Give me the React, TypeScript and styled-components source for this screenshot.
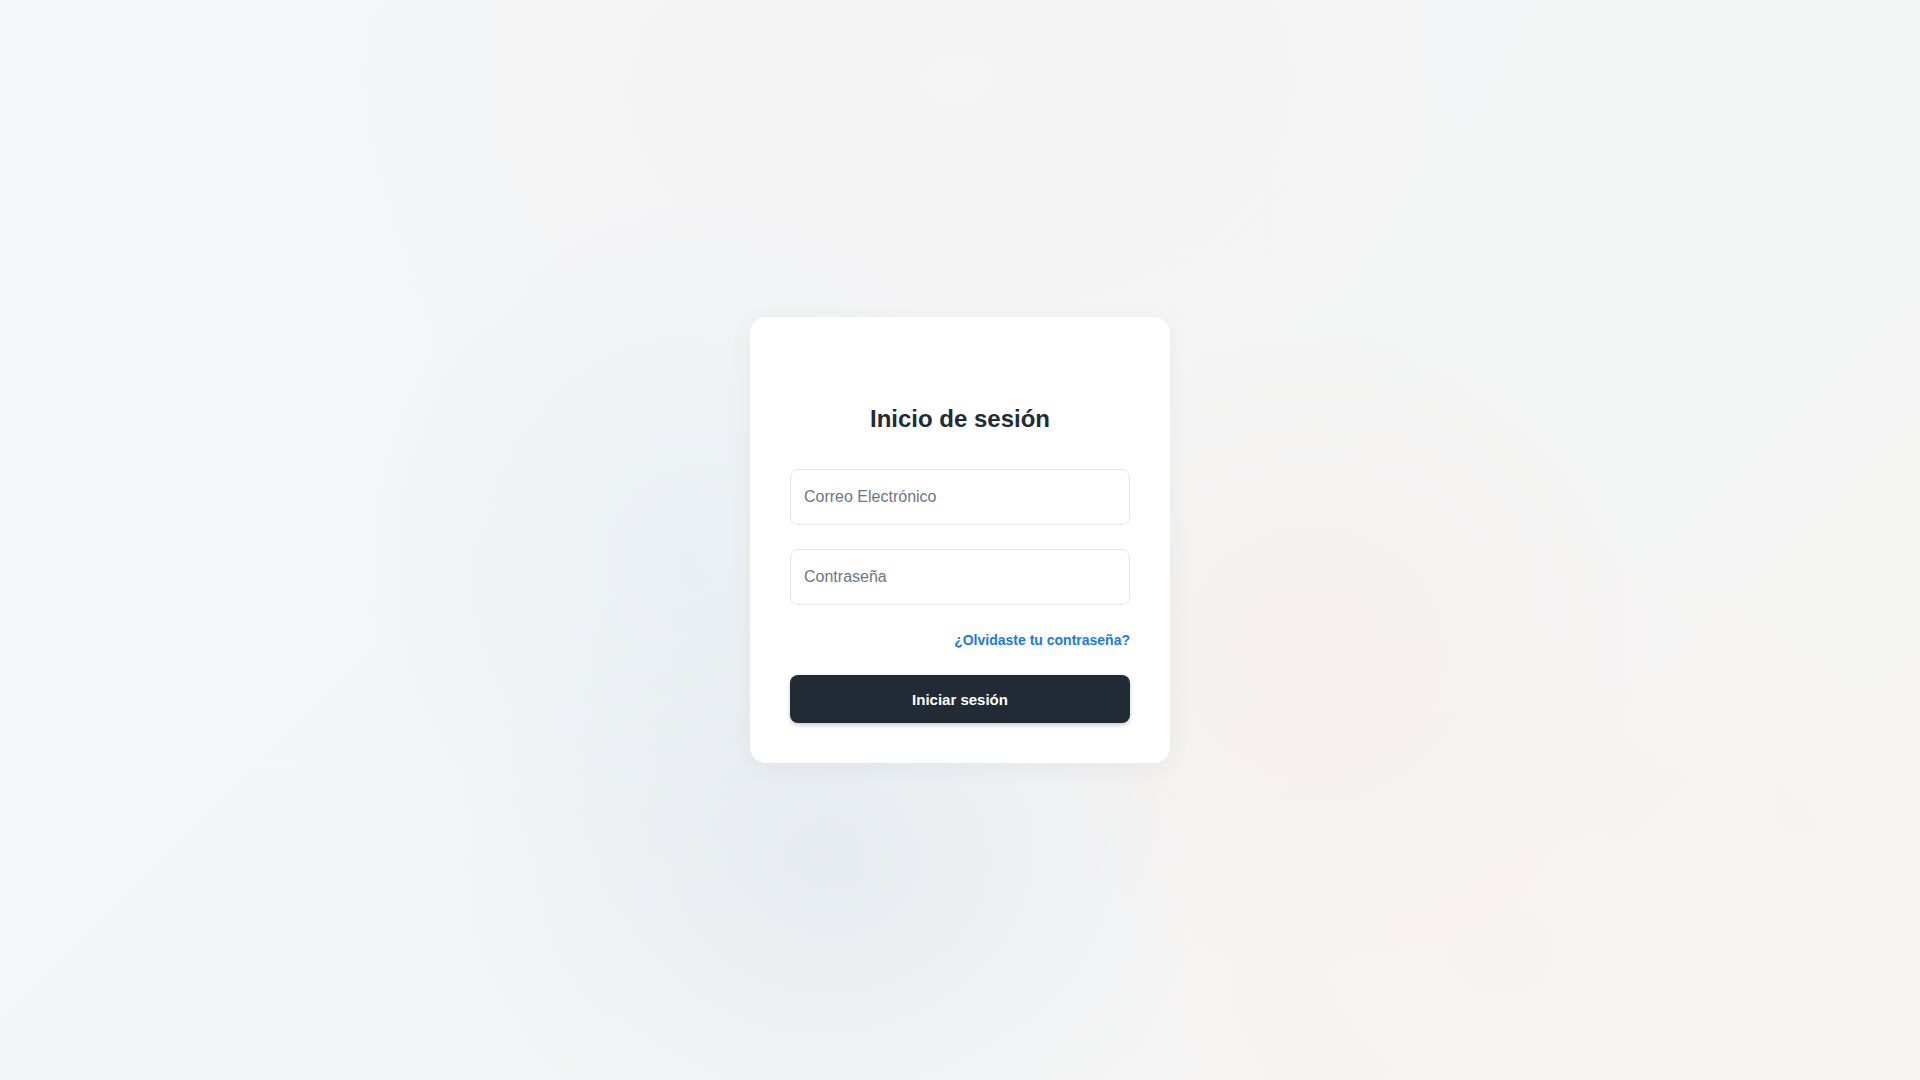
import React from "react";
import styled, { createGlobalStyle } from "styled-components";

const GlobalStyle = createGlobalStyle`
  * {
    box-sizing: border-box;
  }

  html,
  body {
    margin: 0;
    padding: 0;
    height: 100%;
  }

  body {
    font-family: "Liberation Sans", Arial, sans-serif;
    color: #212b36;
  }
`;

const Page = styled.main`
  min-height: 100vh;
  display: flex;
  align-items: center;
  justify-content: center;
  background-color: #f4f5f6;
  background-image:
    radial-gradient(ellipse 380px 320px at 830px 860px, rgba(229, 234, 239, 0.85), rgba(229, 234, 239, 0) 100%),
    radial-gradient(ellipse 320px 360px at 690px 560px, rgba(232, 238, 243, 0.8), rgba(232, 238, 243, 0) 100%),
    radial-gradient(ellipse 340px 320px at 1310px 650px, rgba(245, 238, 236, 0.85), rgba(245, 238, 236, 0) 100%),
    radial-gradient(ellipse 500px 420px at 1500px 950px, rgba(248, 243, 241, 0.8), rgba(248, 243, 241, 0) 100%),
    radial-gradient(ellipse 700px 500px at 960px 80px, rgba(246, 244, 244, 0.9), rgba(246, 244, 244, 0) 100%),
    linear-gradient(135deg, #f4f6f7 0%, #f3f5f6 50%, #f7f5f4 100%);
`;

const Card = styled.section`
  width: 420px;
  padding: 40px;
  background: #ffffff;
  border-radius: 16px;
  box-shadow: 0 4px 24px rgba(30, 40, 60, 0.05);
  display: flex;
  flex-direction: column;
`;

const LogoSlot = styled.div`
  height: 47px;
`;

const Title = styled.h1`
  margin: 0 0 36px;
  font-size: 24px;
  line-height: 29px;
  font-weight: 700;
  text-align: center;
  color: #212b36;
`;

const Form = styled.form`
  display: flex;
  flex-direction: column;
`;

const Input = styled.input`
  width: 100%;
  height: 56px;
  margin-bottom: 24px;
  padding: 0 13px;
  border: 1px solid #e3e6ea;
  border-radius: 8px;
  background: #ffffff;
  font-family: "Liberation Sans", Arial, sans-serif;
  font-size: 16px;
  color: #212b36;
  outline: none;

  &::placeholder {
    color: #6b7785;
  }
`;

const LinkRow = styled.div`
  display: flex;
  justify-content: flex-end;
  margin: 3px 0 27px;
`;

const ForgotLink = styled.a`
  font-size: 14px;
  line-height: 16px;
  font-weight: 700;
  color: #1877f2;
  text-decoration: none;
  cursor: pointer;
`;

const SubmitButton = styled.button`
  width: 100%;
  height: 48px;
  border: none;
  border-radius: 8px;
  background: #212a35;
  color: #ffffff;
  font-family: "Liberation Sans", Arial, sans-serif;
  font-size: 15px;
  font-weight: 700;
  cursor: pointer;
  box-shadow: 0 2px 4px rgba(33, 42, 53, 0.25);
`;

export default function App() {
  return (
    <>
      <GlobalStyle />
      <Page>
        <Card>
          <LogoSlot />
          <Title>Inicio de sesión</Title>
          <Form onSubmit={(e) => e.preventDefault()}>
            <Input type="email" placeholder="Correo Electrónico" />
            <Input type="password" placeholder="Contraseña" />
            <LinkRow>
              <ForgotLink>¿Olvidaste tu contraseña?</ForgotLink>
            </LinkRow>
            <SubmitButton type="submit">Iniciar sesión</SubmitButton>
          </Form>
        </Card>
      </Page>
    </>
  );
}
